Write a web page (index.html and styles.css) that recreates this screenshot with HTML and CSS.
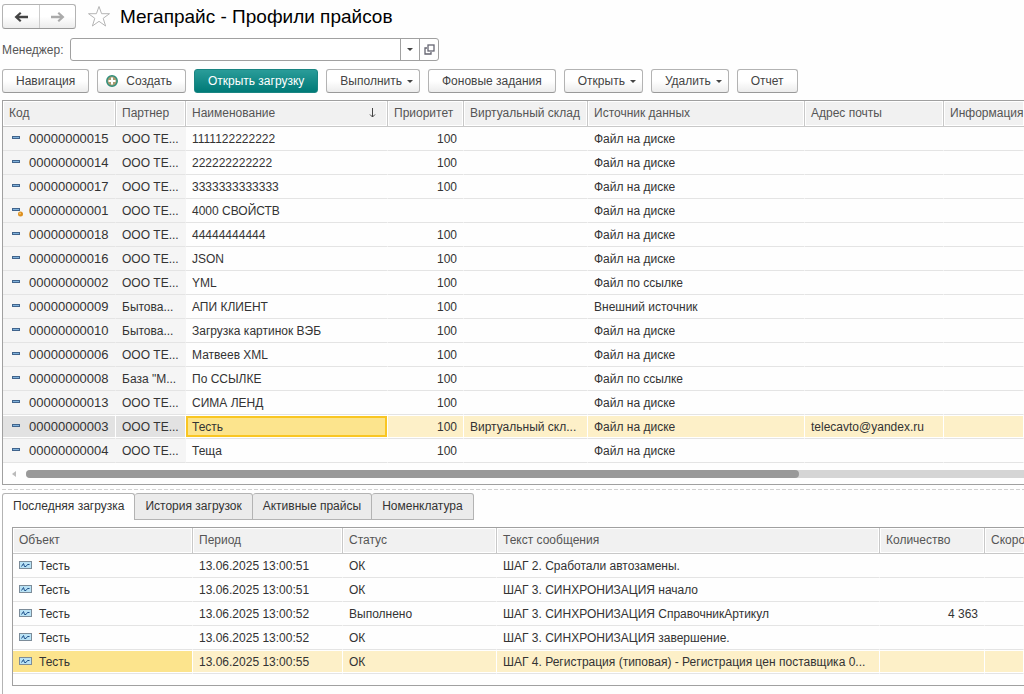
FILE: index.html
```html
<!DOCTYPE html>
<html lang="ru">
<head>
<meta charset="UTF-8">
<meta name="viewport" content="width=device-width, initial-scale=1">
<title>Мегапрайс - Профили прайсов</title>
<link rel="stylesheet" href="styles.css">
</head>
<body>

  <!-- Icons -->
  <svg class="sprite" aria-hidden="true">
    <symbol id="item" viewBox="0 0 12 12">
      <rect x="0.5" y="3.5" width="7" height="2" fill="#7fb2dc" stroke="#41648c"/>
    </symbol>
    <symbol id="item-dot" viewBox="0 0 12 12">
      <rect x="0.5" y="3.5" width="7" height="2" fill="#7fb2dc" stroke="#41648c"/>
      <circle cx="8.5" cy="9" r="2.5" fill="#dd8f1f"/>
      <circle cx="8" cy="8.5" r="1" fill="#f5c56a"/>
    </symbol>
    <symbol id="record" viewBox="0 0 13 8">
      <rect x="0.5" y="0.5" width="12" height="7" fill="#b9e2f5" stroke="#7c8c99"/>
      <path d="M2.5 5.5L4.5 2.5L5.5 5.5H7L8.5 3.5H10.5" fill="none" stroke="#1c4f8a"/>
    </symbol>
  </svg>

  <header class="title-bar">
    <div class="nav-buttons">
      <button class="nav-btn" type="button" aria-label="Назад">
        <svg width="16" height="12" viewBox="0 0 16 12"><path d="M15 4.8V7.2H6L8.5 9.5L7 11L1.5 6L7 1L8.5 2.5L6 4.8Z" fill="#444"/></svg>
      </button>
      <button class="nav-btn" type="button" aria-label="Вперед">
        <svg width="16" height="12" viewBox="0 0 16 12"><path d="M1 4.8V7.2H10L7.5 9.5L9 11L14.5 6L9 1L7.5 2.5L10 4.8Z" fill="#aaa"/></svg>
      </button>
    </div>
    <svg class="star" width="24" height="23" viewBox="0 0 24 23"><path d="M12 1.5L14.6 8.7H22.5L16.2 13.3L18.6 21L12 16.3L5.4 21L7.8 13.3L1.5 8.7H9.4Z" fill="#fff" stroke="#b5b5b5"/></svg>
    <h1>Мегапрайс - Профили прайсов</h1>
  </header>

  <div class="filter">
    <label for="manager">Менеджер:</label>
    <div class="combo">
      <input id="manager" type="text">
      <button type="button" aria-label="Выбрать"><span class="arrow"></span></button>
      <button type="button" aria-label="Открыть">
        <svg width="11" height="11" viewBox="0 0 11 11" fill="none" stroke="#666672"><rect x="4" y="1" width="6" height="6" stroke-width="1.3"/><path d="M3 4H1V10H7V8" stroke-width="1.3"/></svg>
      </button>
    </div>
  </div>

  <div class="toolbar">
    <button class="btn" type="button">Навигация</button>
    <button class="btn create" type="button">
      <svg width="12" height="12" viewBox="0 0 12 12"><circle cx="6" cy="6" r="5.2" fill="#a99b70" stroke="#2f8f7c" stroke-width="1.5"/><path d="M6 2.5V9.5M2.5 6H9.5" stroke="#fff" stroke-width="2"/></svg>
      Создать
    </button>
    <button class="btn primary" type="button">Открыть загрузку</button>
    <button class="btn menu" type="button">Выполнить <span class="arrow"></span></button>
    <button class="btn" type="button">Фоновые задания</button>
    <button class="btn menu" type="button">Открыть <span class="arrow"></span></button>
    <button class="btn menu" type="button">Удалить <span class="arrow"></span></button>
    <button class="btn" type="button">Отчет</button>
  </div>

  <div class="profiles">
    <table class="grid">
      <colgroup>
        <col class="c-code"><col class="c-partner"><col class="c-name"><col class="c-priority">
        <col class="c-store"><col class="c-source"><col class="c-mail"><col>
      </colgroup>
      <thead>
        <tr>
          <th>Код</th><th>Партнер</th>
          <th><div class="sorted">Наименование <svg width="7" height="10" viewBox="0 0 7 10"><path d="M3.5 0V9M1 6.5L3.5 9L6 6.5" fill="none" stroke="#444"/></svg></div></th>
          <th>Приоритет</th><th>Виртуальный склад</th><th>Источник данных</th><th>Адрес почты</th><th>Информация</th>
        </tr>
      </thead>
      <tbody>
        <tr><td class="code"><svg><use href="#item"/></svg>00000000015</td><td class="key">ООО ТЕ...</td><td>1111122222222</td><td class="num">100</td><td></td><td>Файл на диске</td><td></td><td></td></tr>
        <tr><td class="code"><svg><use href="#item"/></svg>00000000014</td><td class="key">ООО ТЕ...</td><td>222222222222</td><td class="num">100</td><td></td><td>Файл на диске</td><td></td><td></td></tr>
        <tr><td class="code"><svg><use href="#item"/></svg>00000000017</td><td class="key">ООО ТЕ...</td><td>3333333333333</td><td class="num">100</td><td></td><td>Файл на диске</td><td></td><td></td></tr>
        <tr><td class="code"><svg><use href="#item-dot"/></svg>00000000001</td><td class="key">ООО ТЕ...</td><td>4000 СВОЙСТВ</td><td></td><td></td><td>Файл на диске</td><td></td><td></td></tr>
        <tr><td class="code"><svg><use href="#item"/></svg>00000000018</td><td class="key">ООО ТЕ...</td><td>44444444444</td><td class="num">100</td><td></td><td>Файл на диске</td><td></td><td></td></tr>
        <tr><td class="code"><svg><use href="#item"/></svg>00000000016</td><td class="key">ООО ТЕ...</td><td>JSON</td><td class="num">100</td><td></td><td>Файл на диске</td><td></td><td></td></tr>
        <tr><td class="code"><svg><use href="#item"/></svg>00000000002</td><td class="key">ООО ТЕ...</td><td>YML</td><td class="num">100</td><td></td><td>Файл по ссылке</td><td></td><td></td></tr>
        <tr><td class="code"><svg><use href="#item"/></svg>00000000009</td><td class="key">Бытова...</td><td>АПИ КЛИЕНТ</td><td class="num">100</td><td></td><td>Внешний источник</td><td></td><td></td></tr>
        <tr><td class="code"><svg><use href="#item"/></svg>00000000010</td><td class="key">Бытова...</td><td>Загрузка картинок ВЭБ</td><td class="num">100</td><td></td><td>Файл на диске</td><td></td><td></td></tr>
        <tr><td class="code"><svg><use href="#item"/></svg>00000000006</td><td class="key">ООО ТЕ...</td><td>Матвеев XML</td><td class="num">100</td><td></td><td>Файл на диске</td><td></td><td></td></tr>
        <tr><td class="code"><svg><use href="#item"/></svg>00000000008</td><td class="key">База "М...</td><td>По ССЫЛКЕ</td><td class="num">100</td><td></td><td>Файл по ссылке</td><td></td><td></td></tr>
        <tr><td class="code"><svg><use href="#item"/></svg>00000000013</td><td class="key">ООО ТЕ...</td><td>СИМА ЛЕНД</td><td class="num">100</td><td></td><td>Файл на диске</td><td></td><td></td></tr>
        <tr class="selected"><td class="code"><svg><use href="#item"/></svg>00000000003</td><td class="key">ООО ТЕ...</td><td class="current">Тесть</td><td class="num">100</td><td>Виртуальный скл...</td><td>Файл на диске</td><td>telecavto@yandex.ru</td><td></td></tr>
        <tr><td class="code"><svg><use href="#item"/></svg>00000000004</td><td class="key">ООО ТЕ...</td><td>Теща</td><td class="num">100</td><td></td><td>Файл на диске</td><td></td><td></td></tr>
      </tbody>
    </table>
    <div class="scrollbar">
      <span class="scroll-left"></span>
      <div class="track"><div class="thumb"></div></div>
    </div>
  </div>

  <div class="splitter"></div>

  <div class="tabs" role="tablist">
    <button class="tab active" type="button" role="tab" aria-selected="true">Последняя загрузка</button>
    <button class="tab" type="button" role="tab">История загрузок</button>
    <button class="tab" type="button" role="tab">Активные прайсы</button>
    <button class="tab" type="button" role="tab">Номенклатура</button>
  </div>

  <div class="tab-panel">
    <div class="log">
      <table class="grid">
        <colgroup>
          <col class="l-object"><col class="l-period"><col class="l-status"><col class="l-text"><col class="l-count"><col>
        </colgroup>
        <thead>
          <tr><th>Объект</th><th>Период</th><th>Статус</th><th>Текст сообщения</th><th>Количество</th><th>Скорость</th></tr>
        </thead>
        <tbody>
          <tr><td class="object"><svg><use href="#record"/></svg>Тесть</td><td>13.06.2025 13:00:51</td><td>ОК</td><td>ШАГ 2. Сработали автозамены.</td><td></td><td></td></tr>
          <tr><td class="object"><svg><use href="#record"/></svg>Тесть</td><td>13.06.2025 13:00:51</td><td>ОК</td><td>ШАГ 3. СИНХРОНИЗАЦИЯ начало</td><td></td><td></td></tr>
          <tr><td class="object"><svg><use href="#record"/></svg>Тесть</td><td>13.06.2025 13:00:52</td><td>Выполнено</td><td>ШАГ 3. СИНХРОНИЗАЦИЯ СправочникАртикул</td><td class="num">4 363</td><td></td></tr>
          <tr><td class="object"><svg><use href="#record"/></svg>Тесть</td><td>13.06.2025 13:00:52</td><td>ОК</td><td>ШАГ 3. СИНХРОНИЗАЦИЯ завершение.</td><td></td><td></td></tr>
          <tr class="selected"><td class="object"><svg><use href="#record"/></svg>Тесть</td><td>13.06.2025 13:00:55</td><td>ОК</td><td>ШАГ 4. Регистрация (типовая) - Регистрация цен поставщика 0...</td><td></td><td></td></tr>
        </tbody>
      </table>
    </div>
  </div>

</body>
</html>
```

FILE: styles.css
```css
* {
  box-sizing: border-box;
}

body {
  margin: 0;
  height: 100vh;
  padding: 4px 0 0 2px;
  display: flex;
  flex-direction: column;
  overflow: hidden;
  background: #fefefe;
  color: #333;
  font-family: "Liberation Sans", Arial, sans-serif;
  font-size: 12px;
  line-height: 16px;
}

button, input {
  font: inherit;
  color: inherit;
}

.sprite {
  display: none;
}

/* Title */
.title-bar {
  display: flex;
  align-items: center;
  height: 25px;
}

.nav-buttons {
  display: flex;
  border: 1px solid #b3b3b3;
  border-bottom-color: #999;
  border-radius: 3px;
  background: linear-gradient(#fff 50%, #ececec);
}

.nav-btn {
  display: flex;
  align-items: center;
  justify-content: center;
  width: 36px;
  height: 23px;
  padding: 0;
  border: none;
  background: none;
}

.nav-btn + .nav-btn {
  border-left: 1px solid #ccc;
}

.star {
  margin: 0 9px 0 11px;
}

h1 {
  margin: 0;
  font-size: 19px;
  line-height: 24px;
  font-weight: normal;
  color: #000;
}

/* Manager field */
.filter {
  display: flex;
  align-items: center;
  gap: 5px;
  margin-top: 9px;
  color: #555;
}

.filter label {
  width: 63px;
  white-space: nowrap;
}

.combo {
  display: flex;
  width: 369px;
  height: 23px;
  border: 1px solid #a0a0a0;
  border-radius: 3px;
  background: #fff;
}

.combo input {
  flex: 1;
  min-width: 0;
  padding: 0 6px;
  border: none;
  outline: none;
  background: none;
}

.combo button {
  display: flex;
  align-items: center;
  justify-content: center;
  width: 19px;
  padding: 0;
  border: none;
  border-left: 1px solid #a0a0a0;
  background: none;
}

.arrow {
  border: 3px solid transparent;
  border-top-color: #444;
  border-bottom: none;
}

/* Command bar */
.toolbar {
  display: flex;
  gap: 8px;
  margin: 8px 0 7px;
}

.btn {
  display: flex;
  align-items: center;
  height: 24px;
  padding: 0 13px;
  border: 1px solid #b3b3b3;
  border-bottom-color: #999;
  border-radius: 3px;
  background: linear-gradient(#fff 50%, #ececec);
  color: #444;
  white-space: nowrap;
}

.btn.create {
  gap: 8px;
  padding-left: 8px;
}

.btn.menu {
  gap: 5px;
  padding-right: 6px;
}

.btn.primary {
  border-color: #1a8582;
  background: linear-gradient(#2a9c99, #007a77);
  color: #fff;
}

/* Tables */
.profiles {
  border: 1px solid #a0a0a0;
  border-right: none;
}

.grid {
  width: 100%;
  table-layout: fixed;
  border-collapse: separate;
  border-spacing: 0;
}

.grid th,
.grid td {
  padding: 0 6px;
  overflow: hidden;
  white-space: nowrap;
  text-align: left;
}

.grid th {
  height: 26px;
  padding-bottom: 2px;
  border-right: 1px solid #c8c8c8;
  border-bottom: 1px solid #c8c8c8;
  background: #f1f1f1;
  box-shadow: inset 0 0 0 1px #fff;
  color: #555;
  font-weight: normal;
}

.grid td {
  height: 24px;
  border-right: 1px solid transparent;
  border-bottom: 1px solid #e4e4e4;
}

.grid th:last-child {
  border-right: none;
  padding-right: 0;
}

.grid .num {
  text-align: right;
}

.sorted {
  display: flex;
  align-items: center;
  justify-content: space-between;
  padding-right: 5px;
}

.code,
.key {
  background: #f5f5f5;
}

.grid .code {
  padding-left: 9px;
  font-size: 13px;
}

.code svg {
  width: 12px;
  height: 12px;
  margin-right: 5px;
  vertical-align: -2px;
}

.object svg {
  width: 13px;
  height: 8px;
  margin-right: 7px;
  vertical-align: 1px;
}

.grid .selected td {
  border-right-color: #fff;
  background: #fdf0c8;
  box-shadow: inset 0 1px #fff, inset 0 -1px #fff;
}

.grid .selected .code,
.grid .selected .key {
  background: #e2e2e2;
}

.grid .selected .object {
  background: #fce48d;
}

.grid .selected .current {
  background: #fce48d;
  box-shadow: inset 0 1px #fff, inset 0 -1px #fff, inset 2px 3px #f9c623, inset -2px -3px #f9c623;
}

.c-code { width: 113px; }
.c-partner { width: 70px; }
.c-name { width: 202px; }
.c-priority { width: 76px; }
.c-store { width: 124px; }
.c-source { width: 217px; }
.c-mail { width: 139px; }

.l-object { width: 180px; }
.l-period { width: 150px; }
.l-status { width: 154px; }
.l-text { width: 383px; }
.l-count { width: 105px; }

/* Horizontal scroll */
.scrollbar {
  display: flex;
  align-items: center;
  height: 21px;
  padding-left: 9px;
  gap: 10px;
}

.scroll-left {
  border: 3px solid transparent;
  border-right: 4px solid #bbb;
  border-left: none;
}

.track {
  flex: 1;
  height: 8px;
  border-radius: 4px 0 0 4px;
  background: #d5d5d5;
}

.thumb {
  width: 77.5%;
  height: 8px;
  border-radius: 4px;
  background: #999;
}

.splitter {
  flex: none;
  height: 1px;
  margin: 4px 0 3px;
  background: repeating-linear-gradient(90deg, #d0d0d0 0 4px, transparent 4px 6px);
}

/* Tabs */
.tabs {
  display: flex;
}

.tab {
  height: 27px;
  padding: 0 10px 2px;
  border: 1px solid #b3b3b3;
  border-left: none;
  border-radius: 3px 3px 0 0;
  background: #ebebeb;
  white-space: nowrap;
}

.tab.active {
  border-left: 1px solid #b3b3b3;
  border-bottom: none;
  background: #fefefe;
}

.tab-panel {
  flex: 1;
  padding: 7px 0 8px 9px;
  border-left: 1px solid #b3b3b3;
}

.log {
  padding-bottom: 11px;
  border: 1px solid #a0a0a0;
  border-right: none;
}
```
